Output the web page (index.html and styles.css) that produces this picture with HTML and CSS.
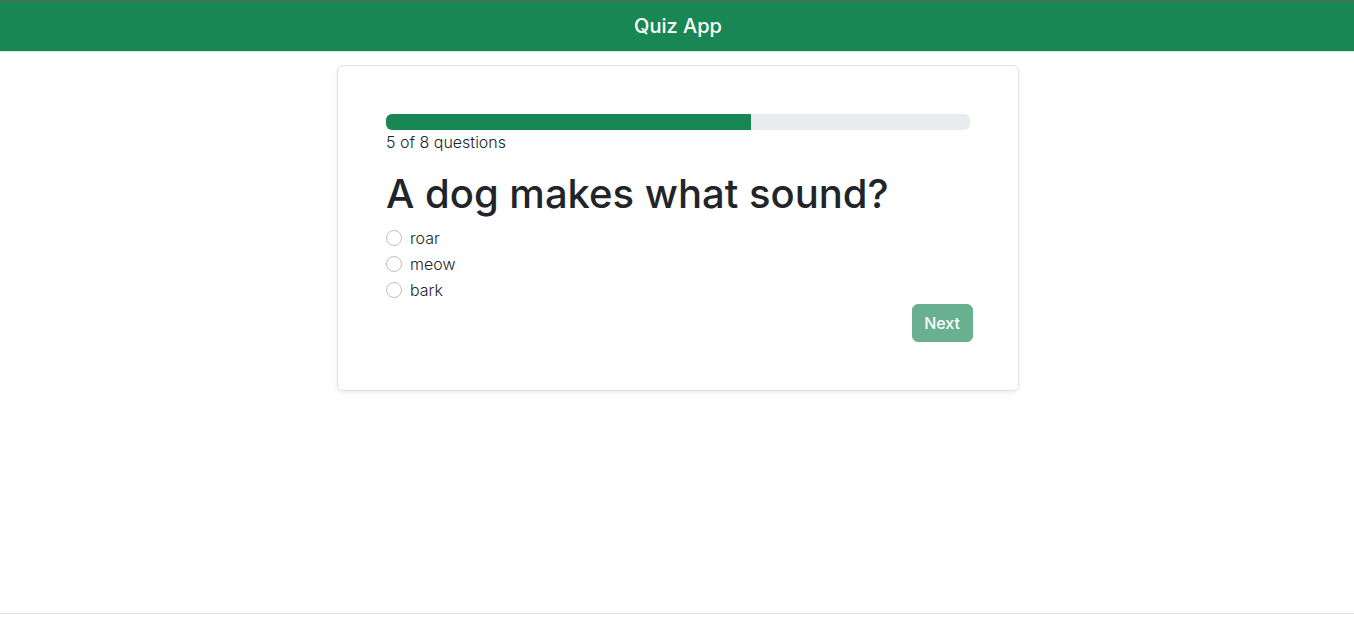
FILE: index.html
```html
<!DOCTYPE html>
<html lang="en">
<head>
<meta charset="utf-8">
<meta name="viewport" content="width=device-width, initial-scale=1">
<title>Quiz App</title>
<link rel="stylesheet" href="styles.css">
</head>
<body>
<header class="navbar"><span class="brand">Quiz App</span></header>
<main class="content">
<form class="card">
<div class="progress" role="progressbar" aria-label="Quiz progress" aria-valuenow="5" aria-valuemin="0" aria-valuemax="8"><div class="progress-bar" style="width: 62.5%"></div></div>
<p class="count">5 of 8 questions</p>
<h1 class="question">A dog makes what sound?</h1>
<div class="answers" role="radiogroup" aria-label="Answers">
<div class="option"><input class="radio" type="radio" name="answer" id="roar"><label for="roar">roar</label></div>
<div class="option"><input class="radio" type="radio" name="answer" id="meow"><label for="meow">meow</label></div>
<div class="option"><input class="radio" type="radio" name="answer" id="bark"><label for="bark">bark</label></div>
</div>
<div class="actions"><button class="next" type="button" disabled>Next</button></div>
</form>
</main>
<footer class="footer"></footer>
</body>
</html>
```
FILE: styles.css
```css
* {
  box-sizing: border-box;
}

body {
  display: flex;
  flex-direction: column;
  min-height: 100vh;
  margin: 0;
  color: #212529;
  background: #fff;
  font: 300 16px/24px Inter, "Liberation Sans", sans-serif;
}

.navbar {
  display: flex;
  justify-content: center;
  padding: 10px 12px 10px 14px;
  border-top: 1px solid #5f6368;
  background: #198754;
  color: #fff;
  font-size: 20px;
  line-height: 30px;
  font-weight: 500;
}

.content {
  flex: 1;
  padding: 13px 12px 14px 14px;
  border-top: 1px solid #dee2e6;
}

.card {
  width: 100%;
  max-width: 682px;
  margin: 0 auto;
  padding: 48px;
  border: 1px solid #dee2e6;
  border-radius: 6px;
  box-shadow: 0 2px 4px rgba(0, 0, 0, 0.075);
}

.progress {
  height: 16px;
  overflow: hidden;
  border-radius: 6px;
  background: #e9ecef;
}

.progress-bar {
  height: 100%;
  background: #198754;
}

.count {
  margin: 0 0 16px;
}

.question {
  margin: 0 0 8px;
  font-size: 40px;
  line-height: 48px;
  font-weight: 500;
}

.option {
  display: flex;
  align-items: center;
  gap: 8px;
  margin-bottom: 2px;
}

.radio {
  width: 16px;
  height: 16px;
  margin: 0;
  appearance: none;
  border: 1px solid #bfbfbf;
  border-radius: 50%;
  background: #fff;
}

.radio:checked {
  border: 5px solid #198754;
}

.actions {
  display: flex;
  justify-content: flex-end;
  margin-right: -3px;
}

.next {
  padding: 6px 12px 6px 11px;
  border: 1px solid #198754;
  border-radius: 6px;
  background: #198754;
  color: #fff;
  font: 500 16px/24px Inter, "Liberation Sans", sans-serif;
}

.next:disabled {
  opacity: 0.65;
}

.footer {
  height: 5px;
  border-top: 1px solid #dee2e6;
}
```
